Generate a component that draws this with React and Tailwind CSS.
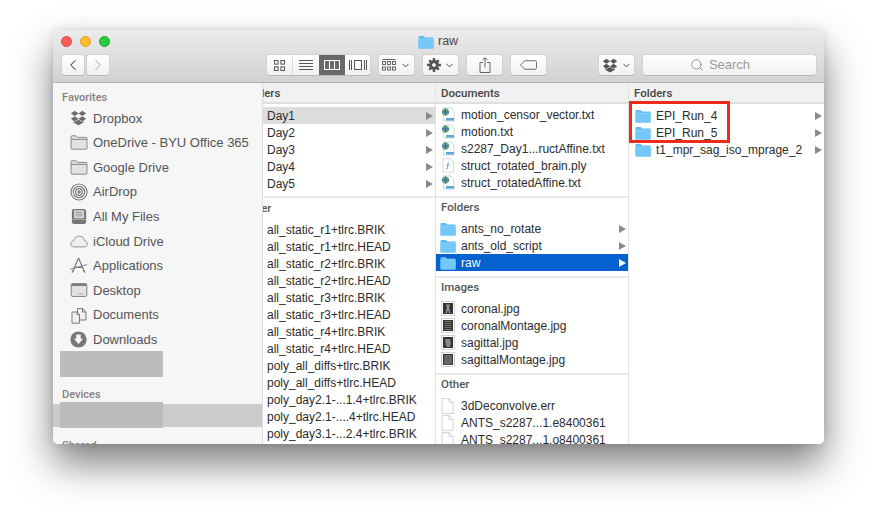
import React from 'react';
import { ChevronLeft, ChevronRight, ChevronDown, Search } from 'lucide-react';

const font = { fontFamily: '"Liberation Sans", Arial, sans-serif' };
const labelFont = { fontFamily: 'Roboto, "Liberation Sans", sans-serif' };

const FolderIcon = ({ className = 'w-[16px] h-[14px]' }) => (
  <svg viewBox="0 0 16 14" className={className}>
    <path d="M0.5 2.2C0.5 1.4 1 1 1.7 1H5.2C5.8 1 6.1 1.2 6.5 1.7L7 2.4H14.6C15.3 2.4 15.6 2.8 15.6 3.4V12.6C15.6 13.2 15.2 13.6 14.6 13.6H1.5C0.9 13.6 0.5 13.2 0.5 12.6Z" fill="#5ebcf3" />
    <path d="M0.5 4.2H15.6V12.6C15.6 13.2 15.2 13.6 14.6 13.6H1.5C0.9 13.6 0.5 13.2 0.5 12.6Z" fill="#74c8f8" />
    <path d="M0.5 4.2H15.6" stroke="#a3dcfb" strokeWidth="0.6" />
  </svg>
);

const TxtIcon = () => (
  <svg viewBox="0 0 16 15" className="w-[16px] h-[15px]">
    <path d="M3.5 1H11L14 4V14H3.5Z" fill="#fff" stroke="#c4c4c4" strokeWidth="0.7" />
    <rect x="6" y="11" width="8" height="2.6" fill="#5aa9dc" />
    <circle cx="5.5" cy="5" r="3.6" fill="#6fa58f" />
    <path d="M5.5 1.4V8.6M1.9 5H9.1" stroke="#2b6f9c" strokeWidth="1.2" />
  </svg>
);

const PlyIcon = () => (
  <svg viewBox="0 0 16 15" className="w-[16px] h-[15px]">
    <path d="M3 0.8H10.5L13.5 3.8V14.2H3Z" fill="#fff" stroke="#c8c8c8" strokeWidth="0.7" />
    <path d="M8.8 4.5C7.6 4.5 8 6 7.7 8.2C7.5 10 7.3 11.3 6 11.2" fill="none" stroke="#4aa3dc" strokeWidth="1" />
    <path d="M6.8 7.2H9.6" stroke="#4aa3dc" strokeWidth="0.8" />
  </svg>
);

const ImageIcon = ({ variant }) => (
  <svg viewBox="0 0 14 15" className="w-[14px] h-[15px] ml-[1px]">
    <rect x="0.5" y="0.5" width="13" height="14" fill="#fff" stroke="#c4c4c4" strokeWidth="0.7" />
    <rect x="2" y="2" width="10" height="11" fill="#333" />
    {variant === 0 && <path d="M5 3.5H9L8 7L9.5 12H8L7 8.5L6 12H4.5L6 7Z" fill="#999" />}
    {variant === 1 && <path d="M3.5 3.5H10.5M3.5 5.5H10.5M3.5 7.5H10.5M3.5 9.5H10.5M3.5 11.5H10.5" stroke="#777" strokeWidth="1" />}
    {variant === 2 && <path d="M4 4H9L10 8L9 12H6L4.5 9Z" fill="#888" />}
    {variant === 3 && <path d="M4 3V12.5M6 3V12.5M8 3V12.5M10 3V12.5" stroke="#999" strokeWidth="1" />}
  </svg>
);

const BlankIcon = () => (
  <svg viewBox="0 0 13 16" className="w-[13px] h-[16px] ml-[1px]">
    <path d="M1 0.6H8L12.2 4.6V15.4H1Z" fill="#fff" stroke="#c8c8c8" strokeWidth="0.8" />
    <path d="M8 0.6V4.6H12.2" fill="none" stroke="#c8c8c8" strokeWidth="0.8" />
  </svg>
);

const DropboxIcon = ({ className, color = '#6c6c6c' }) => (
  <svg viewBox="0 0 20 18" className={className} fill={color}>
    <path d="M5.5 0.5L10 3.6L5.5 6.7L1 3.6Z" />
    <path d="M14.5 0.5L19 3.6L14.5 6.7L10 3.6Z" />
    <path d="M5.5 6.9L10 10L5.5 13L1 9.9Z" />
    <path d="M14.5 6.9L19 9.9L14.5 13L10 10Z" />
    <path d="M10 10.8L14.4 13.8L16 12.8V14.3L10 17.6L4 14.3V12.8L5.6 13.8Z" />
  </svg>
);

const SideFolder = () => (
  <svg viewBox="0 0 18 15" className="w-[18px] h-[15px]" fill="#e2e2e2" stroke="#8a8a8a" strokeWidth="1">
    <path d="M1 2C1 1.2 1.4 0.8 2 0.8H6L7.3 2.4H16C16.6 2.4 17 2.8 17 3.4V13.2C17 13.8 16.6 14.2 16 14.2H2C1.4 14.2 1 13.8 1 13.2Z" />
    <path d="M1 4.4H17" fill="none" />
  </svg>
);

const AirDropIcon = () => (
  <svg viewBox="0 0 18 18" className="w-[18px] h-[18px]" fill="none" stroke="#7c7c7c" strokeWidth="1.2">
    <circle cx="9" cy="9" r="8" />
    <circle cx="9" cy="9" r="5.6" />
    <circle cx="9" cy="9" r="3.3" />
    <circle cx="9" cy="9" r="1.1" fill="#7c7c7c" />
  </svg>
);

const AllFilesIcon = () => (
  <svg viewBox="0 0 18 18" className="w-[16px] h-[17px]">
    <rect x="1" y="0.5" width="16" height="17" rx="2.5" fill="#777" />
    <rect x="3.4" y="2" width="11.2" height="9" fill="#ddd" />
    <path d="M5 4.4H13M5 6.4H13M5 8.4H13" stroke="#888" strokeWidth="0.9" />
    <rect x="1" y="12" width="16" height="1" fill="#aaa" />
  </svg>
);

const CloudIcon = () => (
  <svg viewBox="0 0 20 14" className="w-[18px] h-[13px]" fill="#f0f0f0" stroke="#8a8a8a" strokeWidth="1">
    <path d="M4.6 13C2.4 13 0.8 11.5 0.8 9.6C0.8 7.8 2.2 6.4 4 6.3C4.8 3 7.2 1 10.2 1C13.4 1 15.7 3.2 16 6.2C17.9 6.5 19.2 7.9 19.2 9.7C19.2 11.6 17.7 13 15.6 13Z" />
  </svg>
);

const AppsIcon = () => (
  <svg viewBox="0 0 20 18" className="w-[19px] h-[17px]" fill="none" stroke="#7a7a7a" strokeWidth="1.3">
    <path d="M10 1L4 15M10 1L16 15" />
    <path d="M5.5 11H14.5" />
    <path d="M1 13L19 8" strokeWidth="0.9" />
    <path d="M3 16.5L5 14M17 16.5L15 14" />
  </svg>
);

const DesktopIcon = () => (
  <svg viewBox="0 0 18 15" className="w-[18px] h-[14px]">
    <rect x="0.6" y="0.6" width="16.8" height="13.8" rx="1.5" fill="#e2e2e2" stroke="#7c7c7c" />
    <rect x="1" y="1" width="16" height="2.2" fill="#7c7c7c" />
    <path d="M8 11.5H8.8M10 11.5H10.8M12 11.5H12.8" stroke="#666" />
  </svg>
);

const DocsIcon = () => (
  <svg viewBox="0 0 16 17" className="w-[16px] h-[17px]" fill="#efefef" stroke="#7c7c7c" strokeWidth="1">
    <path d="M6.5 1.5H11.5L15 5V13H6.5Z" />
    <path d="M1 5H6L8.5 7.5V16.2H1Z" />
    <path d="M11.5 1.5V5H15M6 5V7.5H8.5" fill="none" />
  </svg>
);

const DownloadIcon = () => (
  <svg viewBox="0 0 18 18" className="w-[17px] h-[17px]">
    <circle cx="9" cy="9" r="8.6" fill="#777" />
    <path d="M6.6 3.6H11.4V8.2H14L9 13.8L4 8.2H6.6Z" fill="#f5f5f5" />
  </svg>
);

const favorites = [
  ['Dropbox', <DropboxIcon className="w-[17px] h-[16px]" />],
  ['OneDrive - BYU Office 365', <SideFolder />],
  ['Google Drive', <SideFolder />],
  ['AirDrop', <AirDropIcon />],
  ['All My Files', <AllFilesIcon />],
  ['iCloud Drive', <CloudIcon />],
  ['Applications', <AppsIcon />],
  ['Desktop', <DesktopIcon />],
  ['Documents', <DocsIcon />],
  ['Downloads', <DownloadIcon />],
];

const Arrow = ({ white }) => (
  <span className={`ml-auto mr-[2px] w-0 h-0 border-y-[4px] border-y-transparent border-l-[7px] ${white ? 'border-l-white' : 'border-l-[#8a8a8a]'}`} />
);

const Row = ({ icon, name, arrow, selected, active, pad = 'pl-[4px]' }) => (
  <div className={`h-[17px] flex items-center whitespace-nowrap ${pad} ${selected ? 'bg-[#0560d0] text-white' : active ? 'bg-[#dcdcdc]' : ''}`}>
    {icon && <span className="w-[21px] shrink-0 flex items-center">{icon}</span>}
    <span>{name}</span>
    {arrow && <Arrow white={selected} />}
  </div>
);

const Heading = ({ children, clip }) => (
  <div style={labelFont} className={`h-[20px] flex items-center text-[11.5px] text-[#555] whitespace-nowrap font-medium ${clip ? clip : 'pl-[5px]'}`}>{children}</div>
);

const Section = ({ title, children, rule = true }) => (
  <div className={`pb-[5px] ${rule ? 'border-b-2 border-[#e8e8e8]' : ''}`}>
    <div className="pb-[2px]">
      <Heading>{title}</Heading>
    </div>
    {children}
  </div>
);

const ColHeader = ({ children, clip }) => (
  <div style={labelFont} className={`h-[21px] pt-[2px] flex items-center bg-[#f1f1f1] border-b-2 border-[#dedede] text-[11.5px] font-medium text-[#444] whitespace-nowrap ${clip ? clip : 'pl-[5px]'}`}>
    {children}
  </div>
);

const ToolButton = ({ className = '', children }) => (
  <div className={`h-[22px] flex items-center justify-center bg-gradient-to-b from-white to-[#f1f1f1] rounded-[4px] border border-[#d2d2d2] border-b-[#b9b9b9] ${className}`}>
    {children}
  </div>
);

const SideLabel = ({ className = '', children }) => (
  <div style={labelFont} className={`pl-[9px] h-[14px] flex items-center text-[11px] font-medium text-[#85807e] ${className}`}>{children}</div>
);

export default function App() {
  const otherFiles = [
    'all_static_r1+tlrc.BRIK', 'all_static_r1+tlrc.HEAD', 'all_static_r2+tlrc.BRIK', 'all_static_r2+tlrc.HEAD',
    'all_static_r3+tlrc.BRIK', 'all_static_r3+tlrc.HEAD', 'all_static_r4+tlrc.BRIK', 'all_static_r4+tlrc.HEAD',
    'poly_all_diffs+tlrc.BRIK', 'poly_all_diffs+tlrc.HEAD', 'poly_day2.1-...1.4+tlrc.BRIK',
    'poly_day2.1-....4+tlrc.HEAD', 'poly_day3.1-...2.4+tlrc.BRIK',
  ];

  return (
    <div className="w-[877px] h-[520px] bg-white pt-[30px] pl-[53px] overflow-hidden" style={font}>
      <div className="w-[771px] h-[414px] rounded-[5px] overflow-hidden flex flex-col shadow-[0_20px_38px_rgba(0,0,0,0.5),0_0_8px_rgba(0,0,0,0.12)] text-[12px] text-[#2c2c2c]">
        {/* title bar + toolbar */}
        <div className="h-[53px] shrink-0 bg-gradient-to-b from-[#ececec] to-[#d2d2d2] border-b border-[#b4b4b4] flex flex-col">
          <div className="h-[22px] flex items-center pt-[1px] relative">
            <div className="flex gap-[8px] pl-[8px]">
              <span className="w-[11px] h-[11px] rounded-full bg-[#fc5b57] border border-[#e0443e]" />
              <span className="w-[11px] h-[11px] rounded-full bg-[#fdbc2e] border border-[#dea123]" />
              <span className="w-[11px] h-[11px] rounded-full bg-[#28c83f] border border-[#1aab29]" />
            </div>
            <div className="ml-[308px] flex items-center gap-[4px] text-[12.5px] text-[#4a4a4a]">
              <FolderIcon />
              <span>raw</span>
            </div>
          </div>
          <div className="flex items-center pt-[2px]">
            <div className="flex ml-[8px] gap-[1px]">
              <ToolButton className="w-[24px]"><ChevronLeft size={18} strokeWidth={1.4} color="#444" /></ToolButton>
              <ToolButton className="w-[24px]"><ChevronRight size={18} strokeWidth={1.4} color="#b0b0b0" /></ToolButton>
            </div>
            <div className="ml-[156px] w-[105px] h-[22px] flex rounded-[4px] border border-[#d2d2d2] border-b-[#b9b9b9] overflow-hidden bg-gradient-to-b from-white to-[#f1f1f1]">
              <div className="w-[26px] flex items-center justify-center border-r border-[#dcdcdc]">
                <svg viewBox="0 0 11 11" className="w-[11px] h-[11px]" fill="none" stroke="#555"><rect x="0.5" y="0.5" width="3.6" height="3.6" /><rect x="6.9" y="0.5" width="3.6" height="3.6" /><rect x="0.5" y="6.9" width="3.6" height="3.6" /><rect x="6.9" y="6.9" width="3.6" height="3.6" /></svg>
              </div>
              <div className="w-[26px] flex items-center justify-center">
                <svg viewBox="0 0 14 10" className="w-[14px] h-[10px]" stroke="#555" strokeWidth="1"><path d="M0 0.5H14M0 3.5H14M0 6.5H14M0 9.5H14" /></svg>
              </div>
              <div className="w-[26px] flex items-center justify-center bg-[#696969]">
                <svg viewBox="0 0 16 10" className="w-[16px] h-[10px]" fill="#fff" stroke="#fff"><rect x="0.5" y="0.5" width="15" height="9" fill="none" /><path d="M5.5 0.5V9.5M10.5 0.5V9.5" /></svg>
              </div>
              <div className="flex-1 flex items-center justify-center">
                <svg viewBox="0 0 18 10" className="w-[18px] h-[10px]" fill="none" stroke="#555"><rect x="5.5" y="0.5" width="7" height="9" /><path d="M0.5 0V10M2.5 0V10M15.5 0V10M17.5 0V10" /></svg>
              </div>
            </div>
            <ToolButton className="ml-[7px] w-[37px] gap-[4px]">
              <svg viewBox="0 0 14 12" className="w-[14px] h-[12px]" fill="none" stroke="#555" strokeWidth="0.9"><path d="M0.5 0.5H13.5" /><rect x="0.5" y="2.5" width="3" height="3" /><rect x="5.5" y="2.5" width="3" height="3" /><rect x="10.5" y="2.5" width="3" height="3" /><rect x="0.5" y="8" width="3" height="3" /><rect x="5.5" y="8" width="3" height="3" /><rect x="10.5" y="8" width="3" height="3" /></svg>
              <ChevronDown size={11} strokeWidth={2} color="#444" />
            </ToolButton>
            <ToolButton className="ml-[7px] w-[37px] gap-[3px]">
              <svg viewBox="0 0 14 14" className="w-[14px] h-[14px]"><path d="M7 3.6A3.4 3.4 0 1 0 7 10.4A3.4 3.4 0 1 0 7 3.6Z" fill="none" stroke="#555" strokeWidth="3" /><path d="M5.8 0H8.2V2.8H5.8ZM5.8 11.2H8.2V14H5.8ZM0 5.8H2.8V8.2H0ZM11.2 5.8H14V8.2H11.2ZM1.4 3.1L3.1 1.4L5 3.3L3.3 5ZM9 10.7L10.7 9L12.6 10.9L10.9 12.6ZM10.9 1.4L12.6 3.1L10.7 5L9 3.3ZM3.3 9L5 10.7L3.1 12.6L1.4 10.9Z" fill="#555" /></svg>
              <ChevronDown size={11} strokeWidth={2} color="#444" />
            </ToolButton>
            <ToolButton className="ml-[7px] w-[37px]">
              <svg viewBox="0 0 12 16" className="w-[12px] h-[16px]" fill="none" stroke="#555" strokeWidth="0.9"><path d="M4 5.5H1V15.5H11V5.5H8M6 10.5V0.8M3.4 3.2L6 0.6L8.6 3.2" /></svg>
            </ToolButton>
            <ToolButton className="ml-[7px] w-[37px]">
              <svg viewBox="0 0 18 10" className="w-[17px] h-[10px]" fill="none" stroke="#555" strokeWidth="0.9"><path d="M5 0.5H16C16.8 0.5 17.5 1.2 17.5 2V8C17.5 8.8 16.8 9.5 16 9.5H5L0.6 5Z" /></svg>
            </ToolButton>
            <ToolButton className="ml-[51px] w-[37px] gap-[3px]">
              <DropboxIcon className="w-[16px] h-[15px]" color="#555" />
              <ChevronDown size={11} strokeWidth={2} color="#444" />
            </ToolButton>
            <ToolButton className="ml-[7px] w-[175px] gap-[5px] text-[13px] text-[#9a9a9a] pr-[19px]">
              <Search size={14} strokeWidth={1.5} color="#8a8a8a" />
              <span>Search</span>
            </ToolButton>
          </div>
        </div>

        {/* body */}
        <div className="flex-1 flex min-h-0">
          {/* sidebar */}
          <div className="w-[210px] shrink-0 bg-[#f6f6f6] border-r border-[#dcdcdc] overflow-hidden pt-[8px]">
            <SideLabel>Favorites</SideLabel>
            <div className="pt-[1px]">
              {favorites.map(([name, icon]) => (
                <div key={name} className="h-[24.6px] flex items-center pl-[15px] text-[#555] text-[13px] whitespace-nowrap">
                  <span className="w-[23px] shrink-0 flex items-center justify-center -ml-[1px] mr-[3px]">{icon}</span>
                  <span>{name}</span>
                </div>
              ))}
            </div>
            <div className="ml-[7px] w-[103px] h-[26px] -mt-[1px] bg-[#bcbcbc]" />
            <SideLabel className="mt-[11px]">Devices</SideLabel>
            <div className="h-[23px] bg-[#cbcbcb] mt-[2px]">
              <div className="ml-[7px] w-[103px] h-[26px] -translate-y-[2px] bg-[#bcbcbc]" />
            </div>
            <SideLabel className="mt-[12px]">Shared</SideLabel>
          </div>

          {/* column 1 */}
          <div className="w-[173px] shrink-0 bg-white border-r border-[#e2e2e2] overflow-hidden">
            <ColHeader clip="-ml-[21px]">Folders</ColHeader>
            <div className="border-b-2 border-[#e8e8e8] pt-[3px] pb-[4px]">
              {['Day1', 'Day2', 'Day3', 'Day4', 'Day5'].map((d, i) => (
                <Row key={d} name={d} arrow active={i === 0} />
              ))}
            </div>
            <div className="pt-[1px] pb-[2px]">
              <Heading clip="-ml-[20px]">Other</Heading>
            </div>
            {otherFiles.map((f) => <Row key={f} name={f} />)}
          </div>

          {/* column 2 */}
          <div className="w-[193px] shrink-0 bg-white border-r border-[#e2e2e2] overflow-hidden">
            <ColHeader>Documents</ColHeader>
            <div className="border-b-2 border-[#e8e8e8] pt-[2px] pb-[5px]">
              <Row icon={<TxtIcon />} name="motion_censor_vector.txt" />
              <Row icon={<TxtIcon />} name="motion.txt" />
              <Row icon={<TxtIcon />} name="s2287_Day1...ructAffine.txt" />
              <Row icon={<PlyIcon />} name="struct_rotated_brain.ply" />
              <Row icon={<TxtIcon />} name="struct_rotatedAffine.txt" />
            </div>
            <Section title="Folders">
              <Row icon={<FolderIcon />} name="ants_no_rotate" arrow />
              <Row icon={<FolderIcon />} name="ants_old_script" arrow />
              <Row icon={<FolderIcon />} name="raw" arrow selected />
            </Section>
            <Section title="Images">
              {['coronal.jpg', 'coronalMontage.jpg', 'sagittal.jpg', 'sagittalMontage.jpg'].map((n, i) => (
                <Row key={n} icon={<ImageIcon variant={i} />} name={n} />
              ))}
            </Section>
            <Section title="Other" rule={false}>
              <Row icon={<BlankIcon />} name="3dDeconvolve.err" />
              <Row icon={<BlankIcon />} name="ANTS_s2287...1.e8400361" />
              <Row icon={<BlankIcon />} name="ANTS_s2287...1.o8400361" />
            </Section>
          </div>

          {/* column 3 */}
          <div className="flex-1 bg-white overflow-hidden relative">
            <ColHeader>Folders</ColHeader>
            <div className="pt-[3px]">
              <Row pad="pl-[6px]" icon={<FolderIcon />} name="EPI_Run_4" arrow />
              <Row pad="pl-[6px]" icon={<FolderIcon />} name="EPI_Run_5" arrow />
              <Row pad="pl-[6px]" icon={<FolderIcon />} name="t1_mpr_sag_iso_mprage_2" arrow />
            </div>
            {/* red annotation box */}
            <div className="absolute left-0 top-[18px] w-[101px] h-[42px] border-[3px] border-[#ee2a1b]" />
          </div>
        </div>
      </div>
    </div>
  );
}
